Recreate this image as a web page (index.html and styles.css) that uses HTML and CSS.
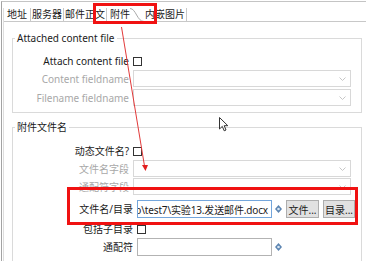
FILE: index.html
```html
<!DOCTYPE html>
<html>
<head>
    <meta charset="utf-8">
    <title>附件</title>
    <link rel="stylesheet" href="styles.css">
</head>
<body>
    <div class="window">
        <div class="panel">
            <div class="tabs">
                <div class="tab">地址</div>
                <div class="tab">服务器</div>
                <div class="tab">邮件正文</div>
                <div class="tab active">附件<svg class="curve" width="14" height="14" viewBox="0 0 14 14"><path d="M0 0.5 C6 0.5 7 13.5 14 13.5" fill="none" stroke="#a9a9a9"/></svg></div>
                <div class="tab last">内嵌图片</div>
            </div>
            <div class="content">
                <fieldset class="group group-content">
                    <legend>Attached content file</legend>
                    <div class="row row-check">
                        <label>Attach content file</label>
                        <span class="check"></span>
                    </div>
                    <div class="row row-tight">
                        <label class="off">Content fieldname</label>
                        <div class="combo"><svg width="7" height="4" viewBox="0 0 7 4"><path d="M0.5 0.5 L3.5 3.5 L6.5 0.5" fill="none" stroke="#c6c6c6"/></svg></div>
                    </div>
                    <div class="row">
                        <label class="off">Filename fieldname</label>
                        <div class="combo"><svg width="7" height="4" viewBox="0 0 7 4"><path d="M0.5 0.5 L3.5 3.5 L6.5 0.5" fill="none" stroke="#c6c6c6"/></svg></div>
                    </div>
                </fieldset>

                <fieldset class="group group-name">
                    <legend>附件文件名</legend>
                    <div class="row row-check">
                        <label>动态文件名?</label>
                        <span class="check"></span>
                    </div>
                    <div class="row row-tight">
                        <label class="off">文件名字段</label>
                        <div class="combo"><svg width="7" height="4" viewBox="0 0 7 4"><path d="M0.5 0.5 L3.5 3.5 L6.5 0.5" fill="none" stroke="#c6c6c6"/></svg></div>
                    </div>
                    <div class="row row-tight">
                        <label class="off">通配符字段</label>
                        <div class="combo"><svg width="7" height="4" viewBox="0 0 7 4"><path d="M0.5 0.5 L3.5 3.5 L6.5 0.5" fill="none" stroke="#c6c6c6"/></svg></div>
                    </div>
                    <div class="row row-wide row-file">
                        <label>文件名/目录</label>
                        <div class="controls">
                            <div class="text focus"><span>o\test7\实验13.发送邮件.docx</span></div>
                            <svg class="var" width="7" height="8" viewBox="0 0 7 8"><path d="M3.5 0 L7 4 L3.5 8 L0 4 Z" fill="#5b84b1"/><circle cx="3.5" cy="4" r="1.3" fill="#d9e6f3"/></svg>
                            <button class="btn">文件...</button>
                            <button class="btn btn-dir">目录...</button>
                        </div>
                    </div>
                    <div class="row row-wide row-check row-sub">
                        <label>包括子目录</label>
                        <span class="check"></span>
                    </div>
                    <div class="row row-wide row-tight row-text">
                        <label>通配符</label>
                        <div class="controls">
                            <div class="text"></div>
                            <svg class="var" width="7" height="8" viewBox="0 0 7 8"><path d="M3.5 0 L7 4 L3.5 8 L0 4 Z" fill="#5b84b1"/><circle cx="3.5" cy="4" r="1.3" fill="#d9e6f3"/></svg>
                        </div>
                    </div>
                </fieldset>
            </div>
        </div>

        <div class="mark mark-tab"></div>
        <div class="mark mark-file"></div>
        <svg class="arrow" width="366" height="261" viewBox="0 0 366 261">
            <line x1="121.5" y1="27" x2="144.5" y2="166" stroke="#e23a3a" stroke-width="1"/>
            <path d="M142 165 L148 165 L145.5 171 Z" fill="#e22020"/>
        </svg>
        <svg class="cursor" width="10" height="15" viewBox="0 0 10 15">
            <path d="M0.5 0.5 L0.5 12 L3.3 9.4 L5.2 13.8 L7 13 L5.2 8.7 L8.8 8.7 Z" fill="#fff" stroke="#333" stroke-width="1" stroke-linejoin="round"/>
        </svg>
    </div>
</body>
</html>
```

FILE: styles.css
```css
body {
    margin: 0;
    background-color: #fff;
    font-family: "Noto Sans", "Noto Sans CJK SC", sans-serif;
    font-size: 10px;
    color: #1b1b1b;
}
.window {
    position: relative;
    width: 365px;
    height: 259px;
    margin: 1px 0 0 1px;
    border-top: 1px solid #c4c4c4;
    border-left: 1px solid #a3a3a3;
    overflow: hidden;
}
.panel {
    margin-left: 1px;
    height: 100%;
    border-left: 1px solid #dedede;
}
.tabs {
    display: flex;
    height: 13px;
    margin-top: 6px;
    border-bottom: 1px solid #c8c8c8;
}
.tab {
    padding: 0 1px;
    line-height: 13px;
    border-right: 1px solid #c8c8c8;
    white-space: nowrap;
}
.tab:first-child {
    padding: 0 3px;
}
.tab.active {
    display: flex;
    padding: 0 0 0 3px;
    height: 14px;
    border-right: none;
    background-color: #fff;
}
.curve {
    display: block;
}
.content {
    padding: 0 5px 0 8px;
}
.group {
    margin: 9px 0 0 0;
    padding: 8px 10px 6px 0;
    border: 1px solid #dadada;
    min-width: 0;
}
.group legend {
    margin-left: 2px;
    padding: 0 2px;
    line-height: 14px;
    color: #1b1b1b;
}
.group-name {
    margin-top: 7px;
    padding-top: 9px;
}
.row {
    display: grid;
    grid-template-columns: 116px 1fr;
    column-gap: 4px;
    align-items: center;
    height: 17px;
    margin-top: 2px;
}
.row:first-of-type {
    margin-top: 0;
}
.row-check {
    height: 16px;
}
.row-tight {
    margin-top: 1px;
}
.row-wide {
    grid-template-columns: 120px 1fr;
}
.row-file {
    height: 20px;
    margin-top: 4px;
}
.row-sub {
    margin-top: 2px;
}
.row-text {
    height: 18px;
}
label {
    text-align: right;
    white-space: nowrap;
    line-height: 14px;
}
label.off {
    color: #a8a8a8;
}
.check {
    width: 9px;
    height: 9px;
    box-sizing: border-box;
    border: 1px solid #333;
    background-color: #fff;
}
.combo {
    height: 17px;
    box-sizing: border-box;
    border: 1px solid #d8d8d8;
    background-color: #fff;
    display: flex;
    align-items: center;
    justify-content: flex-end;
    padding-right: 4px;
}
.controls {
    display: flex;
    align-items: center;
}
.text {
    width: 135px;
    height: 18px;
    box-sizing: border-box;
    border: 1px solid #b3b3b3;
    background-color: #fff;
    display: flex;
    justify-content: flex-end;
    align-items: center;
    overflow: hidden;
    white-space: nowrap;
    padding-right: 3px;
}
.text.focus {
    border-color: #74a6dc;
}
.text span {
    flex-shrink: 0;
    letter-spacing: -0.15px;
    color: #1b1b1b;
}
.var {
    margin: 0 4px 0 3px;
    flex-shrink: 0;
}
.btn {
    width: 33px;
    height: 18px;
    padding: 0;
    box-sizing: border-box;
    border: 1px solid #adadad;
    background-color: #e1e1e1;
    font-family: inherit;
    font-size: 10px;
    color: #1b1b1b;
}
.btn-dir {
    width: 32px;
    margin-left: 4px;
}
.mark {
    position: absolute;
    box-sizing: border-box;
    border: 3px solid #f01212;
}
.mark-tab {
    left: 91px;
    top: 1px;
    width: 64px;
    height: 21px;
}
.mark-file {
    left: 65px;
    top: 185px;
    width: 291px;
    height: 38px;
}
.arrow {
    position: absolute;
    left: -2px;
    top: -2px;
}
.cursor {
    position: absolute;
    left: 217px;
    top: 115px;
}
```
